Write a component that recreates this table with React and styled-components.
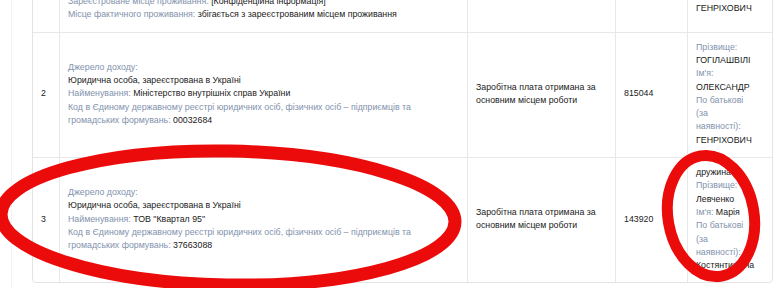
import React from "react";
import styled, { createGlobalStyle } from "styled-components";

const GlobalStyle = createGlobalStyle`
  html, body {
    margin: 0;
    padding: 0;
    background: #ffffff;
  }
  body {
    font-family: "Liberation Sans", Arial, sans-serif;
  }
`;

const rows = [
  {
    num: "1",
    source: [
      ["Джерело доходу:", null],
      [null, "Фізична особа"],
      ["Прізвище:", "ГОГІЛАШВІЛІ"],
      ["Ім'я:", "ОЛЕКСАНДР"],
      ["По батькові (за наявності):", "ГЕНРІХОВИЧ"],
      ["Громадянство:", "Україна"],
      ["РНОКПП:", "[Конфіденційна інформація]"],
      ["Зареєстроване місце проживання:", "[Конфіденційна інформація]"],
      ["Місце фактичного проживання:", "збігається з зареєстрованим місцем проживання"],
    ],
    kind: "Заробітна плата отримана за основним місцем роботи",
    amount: "",
    person: [
      ["Прізвище:", "ГОГІЛАШВІЛІ"],
      ["Ім'я:", "ОЛЕКСАНДР"],
      ["По батькові (за наявності):", "ГЕНРІХОВИЧ"],
    ],
  },
  {
    num: "2",
    source: [
      ["Джерело доходу:", null],
      [null, "Юридична особа, зареєстрована в Україні"],
      ["Найменування:", "Міністерство внутрішніх справ України"],
      [
        "Код в Єдиному державному реєстрі юридичних осіб, фізичних осіб – підприємців та громадських формувань:",
        "00032684",
      ],
    ],
    kind: "Заробітна плата отримана за основним місцем роботи",
    amount: "815044",
    person: [
      ["Прізвище:", "ГОГІЛАШВІЛІ"],
      ["Ім'я:", "ОЛЕКСАНДР"],
      ["По батькові (за наявності):", "ГЕНРІХОВИЧ"],
    ],
  },
  {
    num: "3",
    source: [
      ["Джерело доходу:", null],
      [null, "Юридична особа, зареєстрована в Україні"],
      ["Найменування:", 'ТОВ "Квартал 95"'],
      [
        "Код в Єдиному державному реєстрі юридичних осіб, фізичних осіб – підприємців та громадських формувань:",
        "37663088",
      ],
    ],
    kind: "Заробітна плата отримана за основним місцем роботи",
    amount: "143920",
    relation: "дружина",
    person: [
      ["Прізвище:", "Левченко"],
      ["Ім'я:", "Марія"],
      ["По батькові (за наявності):", "Костянтинівна"],
    ],
  },
];

function Field({ label, value }) {
  return (
    <Line>
      {label && <Label>{label}</Label>}
      {label && value && " "}
      {value && <Value>{value}</Value>}
    </Line>
  );
}

export default function App() {
  return (
    <>
      <GlobalStyle />
      <Page>
        <Frame>
          <Table>
            <colgroup>
              <col style={{ width: 27 }} />
              <col style={{ width: 408 }} />
              <col style={{ width: 148 }} />
              <col style={{ width: 72 }} />
              <col style={{ width: 84 }} />
            </colgroup>
            <tbody>
              {rows.map((row, i) => (
                <tr key={row.num}>
                  <NumCell first={i === 0}>{row.num}</NumCell>
                  <SourceCell first={i === 0}>
                    {row.source.map(([l, v], j) => (
                      <Field key={j} label={l} value={v} />
                    ))}
                  </SourceCell>
                  <Cell first={i === 0}>{row.kind}</Cell>
                  <Cell first={i === 0}>{row.amount}</Cell>
                  <PersonCell first={i === 0} last>
                    {row.relation && (
                      <Line>
                        <Value>{row.relation}</Value>
                      </Line>
                    )}
                    {row.person.map(([l, v]) => (
                      <Field key={l} label={l} value={v} />
                    ))}
                  </PersonCell>
                </tr>
              ))}
            </tbody>
          </Table>
        </Frame>
        <Marks width="780" height="288" viewBox="0 0 780 288">
          <ellipse
            cx="228"
            cy="218"
            rx="227"
            ry="67"
            fill="none"
            stroke="#ec0b0b"
            strokeWidth="13"
            transform="rotate(1 228 218)"
          />
          <ellipse
            cx="711"
            cy="216"
            rx="43"
            ry="61"
            fill="none"
            stroke="#ec0b0b"
            strokeWidth="11"
            transform="rotate(-10 711 216)"
          />
        </Marks>
      </Page>
    </>
  );
}

const Page = styled.div`
  position: relative;
  width: 780px;
  height: 288px;
  overflow: hidden;
  background: #ffffff;
`;

const Frame = styled.div`
  margin-left: 11px;
  margin-top: -107px;
  padding-left: 20px;
  border-left: 1px solid #f3f3f3;
  height: 400px;
`;

const Table = styled.table`
  width: 740px;
  table-layout: fixed;
  border-collapse: separate;
  border-spacing: 0;
  border: 1px solid #e4e4e4;
  border-radius: 4px;
  font-size: 8.8px;
  line-height: 13.3px;
  color: #222222;
`;

const Cell = styled.td`
  padding: 8px 8px 10px;
  vertical-align: middle;
  border-top: ${(p) => (p.first ? "none" : "1px solid #e8e8e8")};
  border-right: ${(p) => (p.last ? "none" : "1px solid #e8e8e8")};
  overflow: visible;
`;

const NumCell = styled(Cell)`
  padding-left: 8px;
  padding-right: 4px;
`;

const SourceCell = styled(Cell)`
  padding-right: 16px;
`;

const PersonCell = styled(Cell)`
  padding-right: 26px;
  white-space: normal;
`;

const Line = styled.div`
  display: block;
`;

const Label = styled.span`
  color: #8292ad;
`;

const Value = styled.span`
  color: #1a1a1a;
`;

const Marks = styled.svg`
  position: absolute;
  left: 0;
  top: 0;
  pointer-events: none;
`;
